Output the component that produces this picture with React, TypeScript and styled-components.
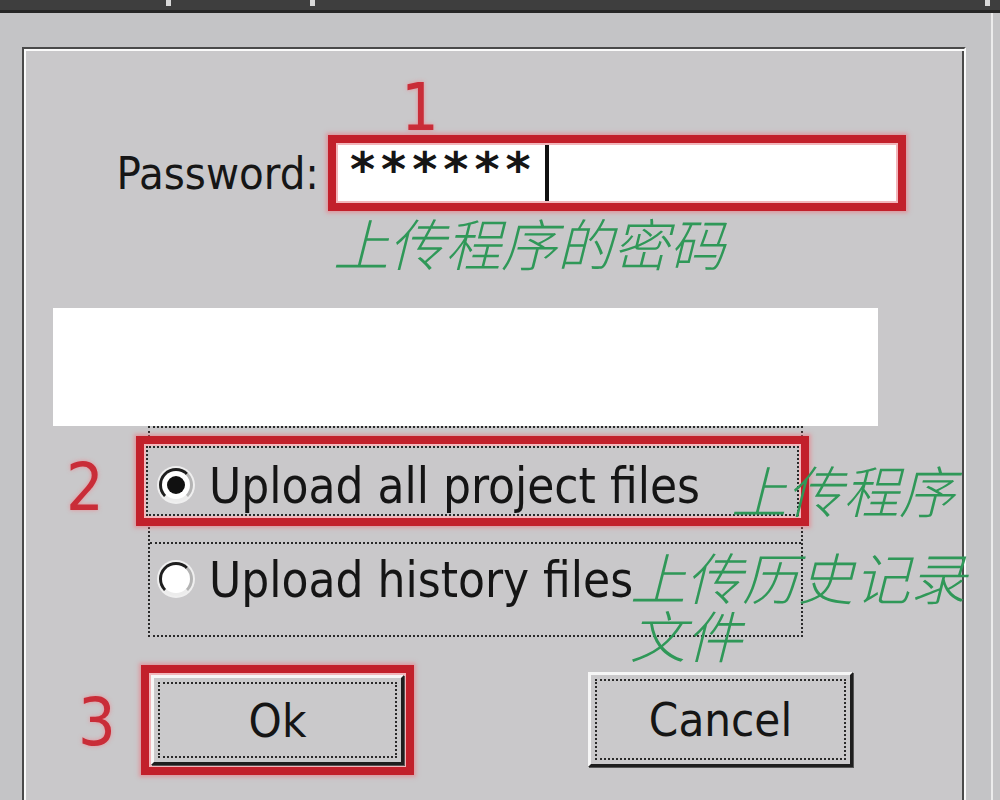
import styled, { createGlobalStyle } from 'styled-components';

const GlobalStyle = createGlobalStyle`
  html, body {
    margin: 0;
    padding: 0;
    background: #c4c4c6;
  }
  body {
    font-family: "DejaVu Sans Condensed", "DejaVu Sans", "Noto Sans CJK SC", sans-serif;
    font-stretch: condensed;
  }
`;

const Screen = styled.div`
  width: 1000px;
  height: 800px;
  overflow: hidden;
  background: #c4c4c6;
  display: flex;
  flex-direction: column;
`;

const TitleBar = styled.div`
  height: 10px;
  flex-shrink: 0;
  background: #3e3e3e;
  border-bottom: 3px solid #262626;
  display: flex;
  align-items: flex-start;
  padding-left: 166px;
`;

const TitleGlyph = styled.span<{ $gap: number }>`
  width: 5px;
  height: 6px;
  background: #d8d8d8;
  margin-left: ${(p) => p.$gap}px;
`;

const WindowBody = styled.div`
  flex: 1;
  width: 993px;
  box-sizing: border-box;
  border-right: 2px solid #ececec;
  padding: 34px 0 0 22px;
`;

const Panel = styled.div`
  width: 944px;
  min-height: 800px;
  box-sizing: border-box;
  background: #c9c8ca;
  border: 2px solid;
  border-color: #4a4a4a #fafafa #fafafa #4a4a4a;
  box-shadow: inset 2px 2px 0 #fafafa, inset -2px -2px 0 #4a4a4a;
  padding-top: 33px;
`;

const Marker = styled.div<{ $left: number; $top: number; $width?: number }>`
  font-family: "DejaVu Sans Condensed", "DejaVu Sans", sans-serif;
  font-stretch: condensed;
  font-size: 66px;
  line-height: 52px;
  color: #c92d38;
  text-shadow: 0 0 4px rgba(240, 130, 140, 0.8);
  padding-left: ${(p) => p.$left}px;
  margin-top: ${(p) => p.$top}px;
  ${(p) => (p.$width ? `width: ${p.$width}px; box-sizing: border-box; flex-shrink: 0;` : '')}
`;

const PasswordGrid = styled.div`
  display: grid;
  grid-template-columns: 304px auto;
  justify-content: start;
`;

const MarkerCell = styled.div`
  grid-column: 2;
  margin-bottom: 1px;
`;

const Label = styled.div`
  grid-column: 1;
  justify-self: end;
  align-self: center;
  padding-right: 9px;
  font-size: 45px;
  line-height: 45px;
  color: #161616;
`;

const RedFrame = styled.div`
  border: 8px solid #c2202b;
  padding: 2px;
  background: #f2b6bb;
  box-shadow: 0 0 4px 2px rgba(238, 112, 122, 0.55);
  display: flex;
  flex-direction: column;
`;

const FrameCell = styled.div<{ $margin?: string }>`
  display: flex;
  margin: ${(p) => p.$margin || '0'};
`;

const Field = styled.div`
  width: 558px;
  height: 56px;
  box-sizing: border-box;
  background: #ffffff;
  display: flex;
  padding-left: 12px;
`;

const Masked = styled.span`
  font-family: "DejaVu Sans", sans-serif;
  font-stretch: normal;
  font-weight: bold;
  font-size: 48px;
  line-height: 48px;
  letter-spacing: 6px;
  color: #151515;
`;

const Caret = styled.span`
  width: 4px;
  align-self: stretch;
  background: #111;
  margin-left: 8px;
`;

const Note = styled.div`
  font-family: "Noto Sans CJK SC", sans-serif;
  font-style: italic;
  font-weight: 300;
  font-size: 56px;
  line-height: 58px;
  color: #2f9858;
`;

const Caption = styled(Note)`
  grid-column: 2;
  margin: 3px 0 0 5px;
  line-height: 56px;
`;

const FloatingNote = styled(Note)<{ $x: number; $y: number; $w: number }>`
  position: absolute;
  left: ${(p) => p.$x}px;
  top: ${(p) => p.$y}px;
  width: ${(p) => p.$w}px;
`;

const WhiteBlock = styled.div`
  margin: 38px 0 0 29px;
  width: 825px;
  height: 118px;
  background: #ffffff;
`;

const OptionsRow = styled.div`
  position: relative;
  display: flex;
  align-items: flex-start;
`;

const Group = styled.div`
  width: 655px;
  box-sizing: border-box;
  border: 2px dotted #2a2a2a;
  display: flex;
  flex-direction: column;
`;

const Option = styled.div<{ $top: number; $height: number; $left: number; $boxed?: boolean }>`
  display: flex;
  align-items: flex-start;
  gap: 16px;
  box-sizing: border-box;
  height: ${(p) => p.$height}px;
  padding: ${(p) => p.$top}px 0 0 ${(p) => p.$left}px;
  background: #c9c8ca;
  ${(p) =>
    p.$boxed
      ? 'border: 2px dotted #2a2a2a;'
      : 'border-top: 2px dotted #2a2a2a; margin-top: 16px;'}
`;

const Radio = styled.span`
  width: 34px;
  height: 34px;
  margin-top: 6px;
  flex-shrink: 0;
  box-sizing: border-box;
  border-radius: 50%;
  border: 3px solid;
  border-color: #1e1e1e #b4b4b4 #ececec #1e1e1e;
  background: #ffffff;
  box-shadow: 0 0 0 2px rgba(255, 255, 255, 0.7);
  display: flex;
  align-items: center;
  justify-content: center;
`;

const Dot = styled.span`
  width: 18px;
  height: 18px;
  border-radius: 50%;
  background: #111;
`;

const OptionText = styled.span`
  font-size: 49px;
  line-height: 49px;
  color: #151515;
  white-space: nowrap;
`;

const ButtonsRow = styled.div`
  display: flex;
  align-items: flex-start;
  margin-top: 28px;
`;

const Button = styled.div<{ $w: number; $h: number }>`
  width: ${(p) => p.$w}px;
  height: ${(p) => p.$h}px;
  box-sizing: border-box;
  border: 3px solid;
  border-color: #f6f6f6 #1e1e1e #1e1e1e #f6f6f6;
  box-shadow: 1px 1px 0 #555;
  background: #cac9cb;
  padding: 4px;
  display: flex;
`;

const FocusRect = styled.div`
  flex: 1;
  border: 2px dotted #2a2a2a;
  display: flex;
  align-items: center;
  justify-content: center;
  font-size: 47px;
  line-height: 47px;
  color: #151515;
`;

const CancelSlot = styled.div`
  margin: 7px 0 0 174px;
`;

export default function App() {
  return (
    <>
      <GlobalStyle />
      <Screen>
        <TitleBar>
          <TitleGlyph $gap={0} />
          <TitleGlyph $gap={139} />
          <TitleGlyph $gap={670} />
        </TitleBar>
        <WindowBody>
          <Panel>
            <PasswordGrid>
              <MarkerCell>
                <Marker $left={73} $top={0}>1</Marker>
              </MarkerCell>
              <Label>Password:</Label>
              <FrameCell>
                <RedFrame>
                  <Field>
                    <Masked>******</Masked>
                    <Caret />
                  </Field>
                </RedFrame>
              </FrameCell>
              <Caption>上传程序的密码</Caption>
            </PasswordGrid>

            <WhiteBlock />

            <OptionsRow>
              <Marker $left={42} $top={36} $width={124}>2</Marker>
              <Group>
                <FrameCell $margin="8px -8px 0 -14px">
                  <RedFrame style={{ flex: 1 }}>
                    <Option $boxed $top={14} $left={11} $height={70}>
                      <Radio>
                        <Dot />
                      </Radio>
                      <OptionText>Upload all project files</OptionText>
                    </Option>
                  </RedFrame>
                </FrameCell>
                <Option $top={12} $left={9} $height={93}>
                  <Radio />
                  <OptionText>Upload history files</OptionText>
                </Option>
              </Group>
              <FloatingNote $x={707} $y={34} $w={300}>上传程序</FloatingNote>
              <FloatingNote $x={606} $y={121} $w={340}>上传历史记录文件</FloatingNote>
            </OptionsRow>

            <ButtonsRow>
              <Marker $left={54} $top={32} $width={117}>3</Marker>
              <RedFrame>
                <Button $w={253} $h={90}>
                  <FocusRect>Ok</FocusRect>
                </Button>
              </RedFrame>
              <CancelSlot>
                <Button $w={265} $h={95}>
                  <FocusRect>Cancel</FocusRect>
                </Button>
              </CancelSlot>
            </ButtonsRow>
          </Panel>
        </WindowBody>
      </Screen>
    </>
  );
}
